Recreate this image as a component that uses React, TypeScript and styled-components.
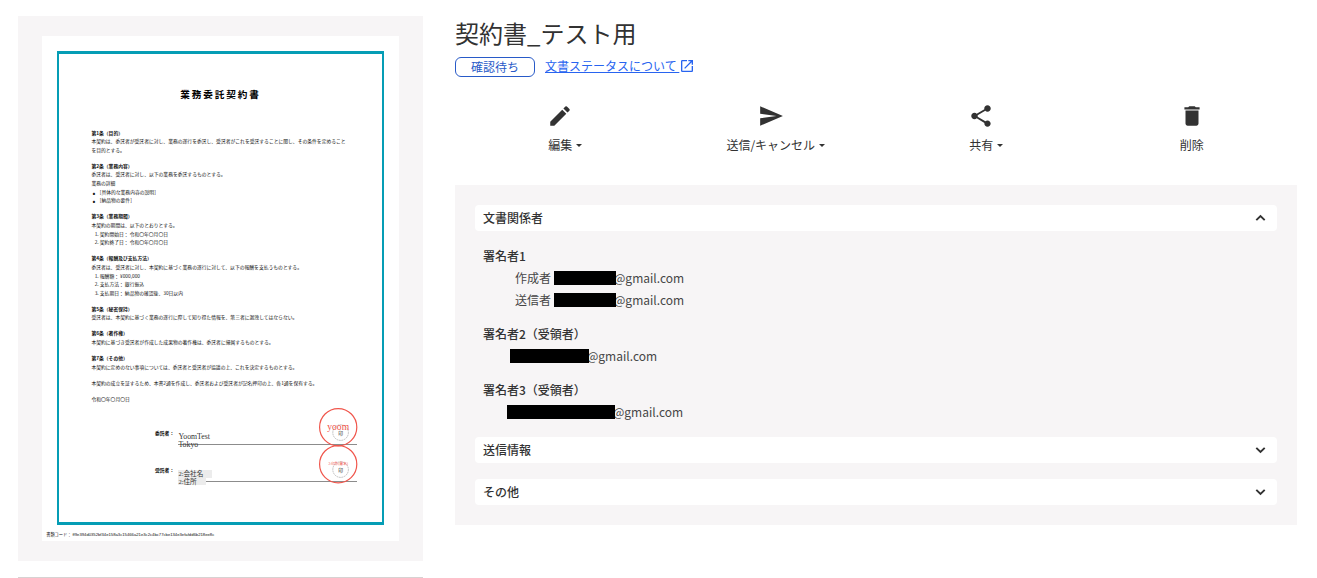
import React from "react";
import styled, { createGlobalStyle } from "styled-components";

const GlobalStyle = createGlobalStyle`
  *, *::before, *::after { box-sizing: border-box; }
  body {
    margin: 0;
    background: #fff;
    color: #323232;
    font: 12px/18px "Noto Sans CJK JP", "Noto Sans", sans-serif;
  }
  h1, h2, h3, p, ul, ol, dl, dd { margin: 0; padding: 0; }
  button { font: inherit; color: inherit; background: none; border: 0; padding: 0; cursor: pointer; }
`;

const Layout = styled.div`
  display: grid;
  grid-template-columns: auto minmax(0, 1fr);
  column-gap: 32px;
  align-items: start;
  padding: 16px 20px 0 18px;
`;

const PreviewPane = styled.section`
  background: #f7f5f6;
  padding: 20px 24px;
`;

const Divider = styled.hr`
  margin: 16px 0 0;
  border: 0;
  border-top: 1px solid #d7d2d2;
`;

/* A4 sheet laid out in points, shown at 60% */
const Sheet = styled.article`
  zoom: 0.6;
  width: 595px;
  min-height: 842px;
  padding: 25px 25px 0;
  background: #fff;
  color: #111;
  font-size: 8px;
  line-height: 14px;
`;

const Frame = styled.div`
  min-height: 790px;
  border: solid #059db5;
  border-width: 5px 4px;
`;

const SheetTitle = styled.h2`
  padding-top: 55px;
  margin-bottom: 46px;
  text-align: center;
  font-size: 16px;
  line-height: 24px;
  letter-spacing: 0.2em;
  color: #000;
`;

const Terms = styled.div`
  display: flex;
  flex-direction: column;
  gap: 13px;
  padding: 0 55px 0 54px;
`;

const ClauseTitle = styled.h3`
  font-size: 8px;
  font-weight: 700;
`;

const NumberedItems = styled.ol`
  margin-top: 1px;
  padding-left: 14px;
`;

const BulletItems = styled.ul`
  margin-top: 1px;
  padding-left: 2px;
  list-style: none;

  li {
    display: grid;
    grid-template-columns: 12px 1fr;
  }
  li::before {
    content: "•";
    font-size: 14px;
  }
`;

const Signatures = styled.div`
  padding: 42px 41px 0 160px;
`;

const SignatureRow = styled.div`
  position: relative;
  display: grid;
  grid-template-columns: 38px 1fr;
  height: 62px;
`;

const SignatureLabel = styled.span`
  font-weight: 700;
`;

const SignatureField = styled.div`
  height: 27px;
  padding: 8px 0 0 1px;
  border-bottom: 1px solid #8c8c8c;
  font: 13px/12px "Liberation Serif", "Noto Sans CJK JP", serif;
  color: #333;
`;

const SignatureLine = styled.span`
  display: block;
`;

const SignatureSlot = styled(SignatureLine)<{ $width: number }>`
  width: ${(p) => p.$width}px;
  background: #ececec;
  font-size: 11px;
`;

const StampDrawing = styled.svg`
  position: absolute;
  right: 0;
  top: -34px;
  width: 64px;
  height: 64px;
  overflow: visible;
`;

const SheetCode = styled.p`
  margin: 11px 0 0 -18px;
  font: 7px/10px "Liberation Sans", "Noto Sans CJK JP", sans-serif;
`;

const Title = styled.h1`
  font-size: 24px;
  line-height: 34px;
  font-weight: 400;
`;

const StatusRow = styled.div`
  display: flex;
  align-items: center;
  gap: 10px;
  height: 20px;
  margin-top: 7px;
`;

const StatusBadge = styled.span`
  width: 80px;
  border: 1px solid #285ac8;
  border-radius: 6px;
  color: #285ac8;
  text-align: center;
`;

const HelpLink = styled.a`
  display: flex;
  align-items: center;
  height: 18px;
  align-self: flex-start;
  color: #2864f0;
  white-space: pre;
  text-decoration: none;
`;

const LinkText = styled.span`
  text-decoration: underline;
`;

const Actions = styled.div`
  display: grid;
  grid-template-columns: repeat(4, 1fr);
  justify-items: center;
  margin: 26px 0 31px;
`;

const ActionButton = styled.button`
  display: flex;
  flex-direction: column;
  align-items: center;
  gap: 7px;
`;

const ActionLabel = styled.span`
  position: relative;
`;

const Caret = styled.span`
  position: absolute;
  left: 100%;
  top: 8px;
  margin-left: 4px;
  border: solid transparent;
  border-width: 3px 3px 0;
  border-top-color: #323232;
`;

const Details = styled.section`
  padding: 20px;
  background: #f7f5f6;
`;

const SectionButton = styled.button`
  display: flex;
  align-items: center;
  justify-content: space-between;
  width: 100%;
  height: 26px;
  padding: 0 8px;
  border-radius: 4px;
  background: #fff;
  font-weight: 500;

  & + & { margin-top: 16px; }
`;

const People = styled.div`
  display: flex;
  flex-direction: column;
  gap: 12px;
  padding: 14px 8px;
  line-height: 22px;
`;

const PersonTitle = styled.h3`
  font-size: 12px;
  font-weight: 500;
`;

const PersonRow = styled.p<{ $indent: number }>`
  display: flex;
  align-items: center;
  padding-left: ${(p) => p.$indent}px;
  color: #464646;
`;

const Role = styled.span`
  margin-right: 3px;
`;

const Redaction = styled.span<{ $width: number }>`
  position: relative;
  width: ${(p) => p.$width}px;
  height: 14px;
  margin-right: -2px;
  background: #000;
`;

const Icon = ({ d, size }: { d: string; size: number }) => (
  <svg width={size} height={size} viewBox="0 0 24 24" fill="currentColor" aria-hidden="true">
    <path d={d} />
  </svg>
);

const paths = {
  edit: "M3 17.25V21h3.75L17.81 9.94l-3.75-3.75L3 17.25zM20.71 7.04c.39-.39.39-1.02 0-1.41l-2.34-2.34a.996.996 0 0 0-1.41 0l-1.83 1.83 3.75 3.75 1.83-1.83z",
  send: "M2.01 21L23 12 2.01 3 2 10l15 2-15 2z",
  share:
    "M18 16.08c-.76 0-1.44.3-1.96.77L8.91 12.7c.05-.23.09-.46.09-.7s-.04-.47-.09-.7l7.05-4.11c.54.5 1.25.81 2.04.81 1.66 0 3-1.34 3-3s-1.34-3-3-3-3 1.34-3 3c0 .24.04.47.09.7L8.04 9.81C7.5 9.31 6.79 9 6 9c-1.66 0-3 1.34-3 3s1.34 3 3 3c.79 0 1.5-.31 2.04-.81l7.12 4.16c-.05.21-.08.43-.08.65 0 1.61 1.31 2.92 2.92 2.92s2.92-1.31 2.92-2.92-1.31-2.92-2.92-2.92z",
  trash: "M6 19c0 1.1.9 2 2 2h8c1.1 0 2-.9 2-2V7H6v12zM19 4h-3.5l-1-1h-5l-1 1H5v2h14V4z",
  open: "M19 19H5V5h7V3H5a2 2 0 0 0-2 2v14a2 2 0 0 0 2 2h14c1.1 0 2-.9 2-2v-7h-2v7zM14 3v2h3.59l-9.83 9.83 1.41 1.41L19 6.41V10h2V3h-7z",
};

const Chevron = ({ up }: { up?: boolean }) => (
  <svg width="17" height="16" viewBox="0 0 17 16" fill="none" stroke="#323232" strokeWidth="1.9" aria-hidden="true">
    <path d={up ? "M4.3 10.2l4.2-4.2 4.2 4.2" : "M4.3 5.8l4.2 4.2 4.2-4.2"} />
  </svg>
);

const Stamp = ({ name, size, baseline }: { name: string; size: number; baseline: number }) => (
  <StampDrawing viewBox="0 0 64 64">
    <circle cx="36" cy="41" r="13" fill="none" stroke="#999" strokeWidth="1" strokeDasharray="3 1" />
    <text x="36" y="45" fontSize="8" textAnchor="middle" fill="#111">印</text>
    <circle cx="32" cy="32" r="31" fill="none" stroke="#f0564c" strokeWidth="2" />
    <text x="32" y={baseline} fontSize={size} textAnchor="middle" fill="#f0564c" fontFamily="'Liberation Serif', 'Noto Sans CJK JP', serif">
      {name}
    </text>
  </StampDrawing>
);

type Clause = { title?: string; text: string[]; items?: string[]; bullets?: boolean };

const clauses: Clause[] = [
  {
    title: "第1条（目的）",
    text: ["本契約は、委託者が受託者に対し、業務の遂行を委託し、受託者がこれを受託することに関し、その条件を定めることを目的とする。"],
  },
  {
    title: "第2条（業務内容）",
    text: ["委託者は、受託者に対し、以下の業務を委託するものとする。", "業務の詳細"],
    items: ["[具体的な業務内容の説明]", "[納品物の要件]"],
    bullets: true,
  },
  {
    title: "第3条（業務期間）",
    text: ["本契約の期間は、以下のとおりとする。"],
    items: ["契約開始日： 令和〇年〇月〇日", "契約終了日： 令和〇年〇月〇日"],
  },
  {
    title: "第4条（報酬及び支払方法）",
    text: ["委託者は、受託者に対し、本契約に基づく業務の遂行に対して、以下の報酬を支払うものとする。"],
    items: ["報酬額： ¥000,000", "支払方法： 銀行振込", "支払期日： 納品物の確認後、30日以内"],
  },
  { title: "第5条（秘密保持）", text: ["受託者は、本契約に基づく業務の遂行に際して知り得た情報を、第三者に漏洩してはならない。"] },
  { title: "第6条（著作権）", text: ["本契約に基づき受託者が作成した成果物の著作権は、委託者に帰属するものとする。"] },
  { title: "第7条（その他）", text: ["本契約に定めのない事項については、委託者と受託者が協議の上、これを決定するものとする。"] },
  { text: ["本契約の成立を証するため、本書2通を作成し、委託者および受託者が記名押印の上、各1通を保有する。"] },
  { text: ["令和〇年〇月〇日"] },
];

const actions = [
  { label: "編集", icon: paths.edit, menu: true },
  { label: "送信/キャンセル", icon: paths.send, menu: true },
  { label: "共有", icon: paths.share, menu: true },
  { label: "削除", icon: paths.trash, menu: false },
];

const people = [
  {
    title: "署名者1",
    rows: [
      { role: "作成者", indent: 32, mask: 62 },
      { role: "送信者", indent: 32, mask: 62 },
    ],
  },
  { title: "署名者2（受領者）", rows: [{ role: "", indent: 27, mask: 79 }] },
  { title: "署名者3（受領者）", rows: [{ role: "", indent: 24, mask: 108 }] },
];

const ClauseItems = ({ items, bullets }: { items: string[]; bullets?: boolean }) => {
  const List = bullets ? BulletItems : NumberedItems;
  return (
    <List>
      {items.map((t) => (
        <li key={t}>{t}</li>
      ))}
    </List>
  );
};

export default function App() {
  return (
    <>
      <GlobalStyle />
      <Layout lang="ja">
        <div>
          <PreviewPane>
            <Sheet>
              <Frame>
                <SheetTitle>業務委託契約書</SheetTitle>
                <Terms>
                  {clauses.map((c) => (
                    <div key={c.text[0]}>
                      {c.title && <ClauseTitle>{c.title}</ClauseTitle>}
                      {c.text.map((t) => (
                        <p key={t}>{t}</p>
                      ))}
                      {c.items && <ClauseItems items={c.items} bullets={c.bullets} />}
                    </div>
                  ))}
                </Terms>
                <Signatures>
                  <SignatureRow>
                    <SignatureLabel>委託者：</SignatureLabel>
                    <SignatureField>
                      <SignatureLine>YoomTest</SignatureLine>
                      <SignatureLine>Tokyo</SignatureLine>
                    </SignatureField>
                    <Stamp name="yoom" size={16} baseline={37} />
                  </SignatureRow>
                  <SignatureRow>
                    <SignatureLabel>受託者：</SignatureLabel>
                    <SignatureField>
                      <SignatureSlot $width={56}>2:会社名</SignatureSlot>
                      <SignatureSlot $width={46}>2:住所</SignatureSlot>
                    </SignatureField>
                    <Stamp name="2:印影(署名)" size={6} baseline={34} />
                  </SignatureRow>
                </Signatures>
              </Frame>
              <SheetCode>書類コード： ff9e394d0352bf34e158a3c15466a21e3c2c4bc77cbe134e3efafdd6b218ee8c</SheetCode>
            </Sheet>
          </PreviewPane>
          <Divider />
        </div>

        <main>
          <Title>契約書_テスト用</Title>
          <StatusRow>
            <StatusBadge>確認待ち</StatusBadge>
            <HelpLink href="#status">
              <LinkText>{"文書ステータスについて "}</LinkText>
              <Icon d={paths.open} size={16} />
            </HelpLink>
          </StatusRow>

          <Actions>
            {actions.map((a) => (
              <ActionButton key={a.label} type="button">
                <Icon d={a.icon} size={26} />
                <ActionLabel>
                  {a.label}
                  {a.menu && <Caret />}
                </ActionLabel>
              </ActionButton>
            ))}
          </Actions>

          <Details>
            <SectionButton type="button" aria-expanded="true">
              文書関係者
              <Chevron up />
            </SectionButton>
            <People>
              {people.map((p) => (
                <div key={p.title}>
                  <PersonTitle>{p.title}</PersonTitle>
                  {p.rows.map((r) => (
                    <PersonRow key={r.role} $indent={r.indent}>
                      {r.role && <Role>{r.role}</Role>}
                      <Redaction $width={r.mask} />
                      @gmail.com
                    </PersonRow>
                  ))}
                </div>
              ))}
            </People>
            <SectionButton type="button" aria-expanded="false">
              送信情報
              <Chevron />
            </SectionButton>
            <SectionButton type="button" aria-expanded="false">
              その他
              <Chevron />
            </SectionButton>
          </Details>
        </main>
      </Layout>
    </>
  );
}
